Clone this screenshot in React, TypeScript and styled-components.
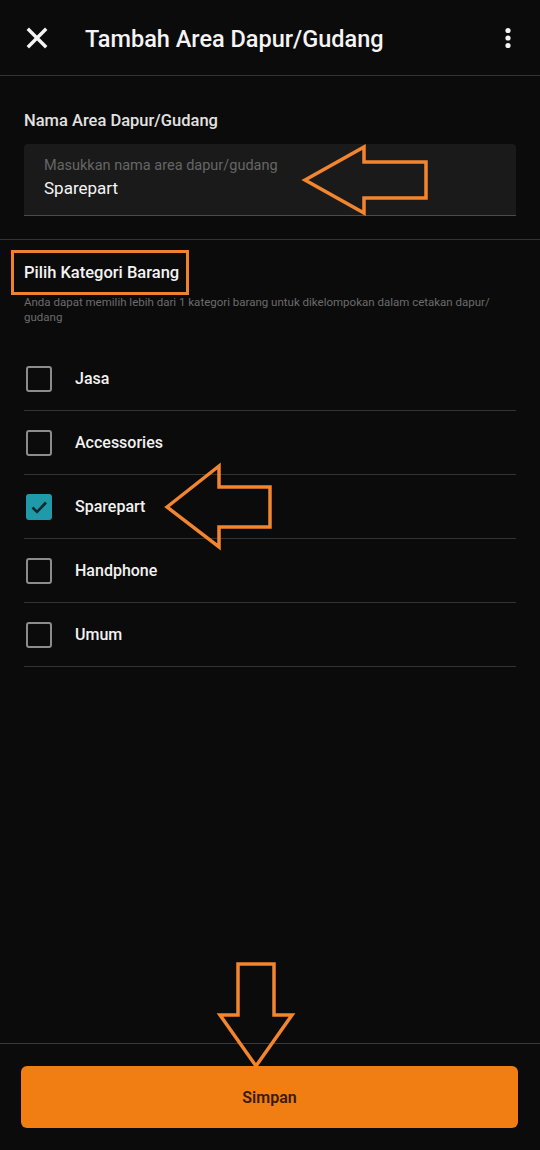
import React, { useState } from 'react';
import styled, { createGlobalStyle } from 'styled-components';

const GlobalStyle = createGlobalStyle`
  html, body {
    margin: 0;
    padding: 0;
    background: #0b0b0b;
  }
  * {
    box-sizing: border-box;
  }
`;

const Page = styled.div`
  position: relative;
  width: 540px;
  height: 1150px;
  display: flex;
  flex-direction: column;
  background: #0b0b0b;
  color: #f2f2f2;
  font-family: Roboto, "Noto Sans", sans-serif;
  overflow: hidden;
`;

const Header = styled.header`
  height: 76px;
  display: flex;
  align-items: center;
  padding: 0 20px 0 25px;
  border-bottom: 1px solid #333;
`;

const IconButton = styled.div`
  width: 24px;
  height: 24px;
  display: flex;
  align-items: center;
  justify-content: center;
`;

const Title = styled.h1`
  flex: 1;
  margin: 2px 0 0 36px;
  font-size: 23.5px;
  font-weight: 500;
  color: #f4f4f4;
  letter-spacing: 0;
`;

const Main = styled.main`
  flex: 1;
  display: flex;
  flex-direction: column;
`;

const NameSection = styled.section`
  padding: 35px 24px 23px;
  border-bottom: 1px solid #333;
`;

const Label = styled.div`
  font-size: 16.5px;
  line-height: 20px;
  font-weight: 500;
  color: #e2e2e2;
  margin-bottom: 13px;
`;

const InputBox = styled.div`
  height: 72px;
  padding: 12px 20px 0;
  background: #1a1a1a;
  border-radius: 4px 4px 0 0;
  border-bottom: 1px solid #4a4a4a;
`;

const Placeholder = styled.div`
  font-size: 14.5px;
  line-height: 19px;
  color: #666;
`;

const Value = styled.div`
  margin-top: 3px;
  font-size: 17px;
  line-height: 21px;
  color: #f4f4f4;
`;

const CategorySection = styled.section`
  padding: 10px 24px 0;
`;

const Highlight = styled.div`
  display: inline-block;
  margin-left: -13px;
  padding: 9px 7px 9px 10px;
  border: 3px solid #f0812f;
`;

const Heading = styled.h2`
  margin: 0;
  font-size: 16.5px;
  line-height: 21px;
  font-weight: 500;
  color: #f4f4f4;
`;

const Helper = styled.p`
  margin: 0;
  max-width: 485px;
  font-size: 11.5px;
  line-height: 15px;
  color: #6c6c6c;
`;

const List = styled.div`
  margin-top: 22px;
`;

const Row = styled.label`
  height: 64px;
  display: flex;
  align-items: center;
  gap: 23px;
  padding-left: 2px;
  border-bottom: 1px solid #333;
  cursor: pointer;
`;

const Box = styled.span<{ $checked: boolean }>`
  width: 26px;
  height: 26px;
  border-radius: 3px;
  display: flex;
  align-items: center;
  justify-content: center;
  border: 2px solid ${({ $checked }) => ($checked ? '#1f9aa8' : '#8c8c8c')};
  background: ${({ $checked }) => ($checked ? '#1f9aa8' : 'transparent')};
`;

const RowText = styled.span`
  font-size: 16px;
  font-weight: 500;
  color: #f2f2f2;
`;

const Footer = styled.footer`
  padding: 22px 22px 22px 21px;
  border-top: 1px solid #3a3a3a;
`;

const SaveButton = styled.button`
  width: 100%;
  height: 62px;
  border: none;
  border-radius: 6px;
  background: #f07e12;
  color: #3a1a02;
  font-family: Roboto, "Noto Sans", sans-serif;
  font-size: 16px;
  font-weight: 600;
`;

const Overlay = styled.svg`
  position: absolute;
  left: 0;
  top: 0;
  pointer-events: none;
`;

const categories = ['Jasa', 'Accessories', 'Sparepart', 'Handphone', 'Umum'];

const App: React.FC = () => {
  const [selected, setSelected] = useState<string[]>(['Sparepart']);

  const toggle = (name: string) =>
    setSelected(s => (s.includes(name) ? s.filter(n => n !== name) : [...s, name]));

  return <>
    <GlobalStyle />
    <Page>
      <Header>
        <IconButton>
          <svg width="22" height="22" viewBox="0 0 22 22">
            <path d="M3 3 L19 19 M19 3 L3 19" stroke="#f4f4f4" strokeWidth="3.4" strokeLinecap="square" />
          </svg>
        </IconButton>
        <Title>Tambah Area Dapur/Gudang</Title>
        <IconButton>
          <svg width="8" height="24" viewBox="0 0 8 24">
            <circle cx="4" cy="4.5" r="2.6" fill="#f4f4f4" />
            <circle cx="4" cy="12" r="2.6" fill="#f4f4f4" />
            <circle cx="4" cy="19.5" r="2.6" fill="#f4f4f4" />
          </svg>
        </IconButton>
      </Header>

      <Main>
        <NameSection>
          <Label>Nama Area Dapur/Gudang</Label>
          <InputBox>
            <Placeholder>Masukkan nama area dapur/gudang</Placeholder>
            <Value>Sparepart</Value>
          </InputBox>
        </NameSection>

        <CategorySection>
          <Highlight>
            <Heading>Pilih Kategori Barang</Heading>
          </Highlight>
          <Helper>Anda dapat memilih lebih dari 1 kategori barang untuk dikelompokan dalam cetakan dapur/ gudang</Helper>
          <List>
            {categories.map(name => {
              const checked = selected.includes(name);
              return <Row key={name} onClick={() => toggle(name)}>
                <Box $checked={checked}>
                  {checked && <svg width="18" height="18" viewBox="0 0 18 18">
                    <path d="M2.5 9.5 L7 14 L16 4.5" fill="none" stroke="#0d2a2f" strokeWidth="2.6" />
                  </svg>}
                </Box>
                <RowText>{name}</RowText>
              </Row>;
            })}
          </List>
        </CategorySection>
      </Main>

      <Footer>
        <SaveButton>Simpan</SaveButton>
      </Footer>

      <Overlay width="540" height="1150" viewBox="0 0 540 1150">
        <g fill="none" stroke="#f4852f" strokeWidth="3.5" strokeLinejoin="miter">
          <polygon points="305,180 364,147 364,162 426,162 426,198 364,198 364,213" />
          <polygon points="167,507 219,466 219,487 270,487 270,527 219,527 219,547" />
          <polygon points="238,964 274,964 274,1015 292,1015 256,1066 220,1015 238,1015" />
        </g>
      </Overlay>
    </Page>
  </>;
};

export default App;
